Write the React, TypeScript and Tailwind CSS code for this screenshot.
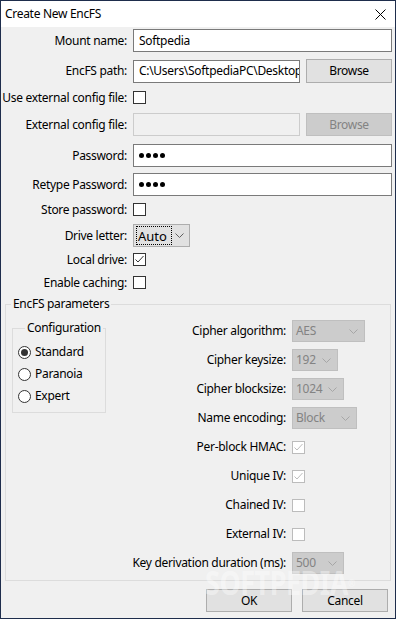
import React from "react"

const font = { fontFamily: '"Noto Sans", "Open Sans", Arial, sans-serif' }

const Chevron = ({ disabled }: { disabled?: boolean }) => (
  <svg width="9" height="5" viewBox="0 0 9 5" className="shrink-0">
    <polyline points="0.5,0.5 4.5,4.5 8.5,0.5" fill="none" stroke={disabled ? "#a6a6a6" : "#606060"} strokeWidth="1" />
  </svg>
)

const Check = ({ checked, disabled }: { checked?: boolean; disabled?: boolean }) => (
  <div className={`w-[13px] h-[13px] border bg-white flex items-center justify-center ${disabled ? "border-[#bcbcbc]" : "border-[#333333]"}`}>
    {checked && (
      <svg width="11" height="11" viewBox="0 0 11 11">
        <polyline points="1.5,5.5 4,8 9.5,2" fill="none" stroke={disabled ? "#bcbcbc" : "#333333"} strokeWidth="1" />
      </svg>
    )}
  </div>
)

const Radio = ({ checked, label }: { checked?: boolean; label: string }) => (
  <div className="flex items-center h-[22px] gap-[4px]">
    <div className="w-[13px] h-[13px] rounded-full border border-[#333333] bg-white flex items-center justify-center">
      {checked && <div className="w-[7px] h-[7px] rounded-full bg-[#333333]" />}
    </div>
    <span>{label}</span>
  </div>
)

const Combo = ({ value, width, disabled }: { value: string; width: string; disabled?: boolean }) => (
  <div className={`${width} h-[22px] border flex items-center justify-between pl-[3px] pr-[6px] ${disabled ? "bg-[#cccccc] border-[#bfbfbf] text-[#838383]" : "bg-[#e1e1e1] border-[#adadad]"}`}>
    <span>{value}</span>
    <Chevron disabled={disabled} />
  </div>
)

const Label = ({ children }: { children: React.ReactNode }) => (
  <div className="flex justify-end items-center whitespace-nowrap">{children}</div>
)

const TextBox = ({ children, disabled }: { children?: React.ReactNode; disabled?: boolean }) => (
  <div className={`h-[23px] border flex items-center px-[5px] overflow-hidden whitespace-nowrap ${disabled ? "bg-[#f0f0f0] border-[#cccccc]" : "bg-white border-[#7a7a7a]"}`}>
    {children}
  </div>
)

const Button = ({ children, disabled, width }: { children: React.ReactNode; disabled?: boolean; width: string }) => (
  <div className={`${width} h-[23px] border flex items-center justify-center shrink-0 ${disabled ? "bg-[#cccccc] border-[#bfbfbf] text-[#838383]" : "bg-[#e1e1e1] border-[#adadad]"}`}>
    {children}
  </div>
)

const Dots = () => (
  <div className="flex gap-[2px]">
    {[0, 1, 2, 3].map((i) => (
      <div key={i} className="w-[5px] h-[5px] rounded-full bg-black" />
    ))}
  </div>
)

export default function App() {
  return (
    <div style={font} className="relative w-[396px] h-[619px] border border-[#1e2d4c] flex flex-col text-[12px] leading-[16px] tracking-[-0.3px] text-black overflow-hidden">
      <div className="h-[26px] bg-white flex items-center justify-between pl-[4px] pr-[9px] shrink-0">
        <span>Create New EncFS</span>
        <svg width="11" height="11" viewBox="0 0 11 11">
          <path d="M0.5 0.5 L10.5 10.5 M10.5 0.5 L0.5 10.5" stroke="#000" strokeWidth="1" />
        </svg>
      </div>

      <div className="flex-1 bg-[#f0f0f0] flex flex-col">
        <div className="grid grid-cols-[126px_minmax(0,1fr)] gap-x-[6px] pr-[3px] pt-[2px]">
          <Label>Mount name:</Label>
          <TextBox>Softpedia</TextBox>

          <Label>
            <span className="mt-[7px]">EncFS path:</span>
          </Label>
          <div className="flex gap-[6px] mt-[7px] h-[24px] items-center min-w-0">
            <div className="flex-1 min-w-0">
              <TextBox>C:\Users\SoftpediaPC\Desktop\Encrypted</TextBox>
            </div>
            <div className="w-[86px] h-[24px] shrink-0 border bg-[#e1e1e1] border-[#adadad] flex items-center justify-center">Browse</div>
          </div>

          <Label>
            <span className="mt-[3px]">Use external config file:</span>
          </Label>
          <div className="h-[23px] mt-[3px] flex items-center">
            <Check />
          </div>

          <Label>
            <span className="mt-[4px]">External config file:</span>
          </Label>
          <div className="flex gap-[6px] mt-[4px] min-w-0">
            <div className="flex-1 min-w-0">
              <TextBox disabled />
            </div>
            <Button width="w-[86px]" disabled>
              Browse
            </Button>
          </div>

          <Label>
            <span className="mt-[8px]">Password:</span>
          </Label>
          <div className="mt-[8px]">
            <TextBox>
              <Dots />
            </TextBox>
          </div>

          <Label>
            <span className="mt-[6px]">Retype Password:</span>
          </Label>
          <div className="mt-[6px]">
            <TextBox>
              <Dots />
            </TextBox>
          </div>

          <Label>
            <span className="mt-[2px]">Store password:</span>
          </Label>
          <div className="h-[23px] mt-[2px] flex items-center">
            <Check />
          </div>

          <Label>
            <span className="mt-[3px]">Drive letter:</span>
          </Label>
          <div className="mt-[3px]">
            <div className="w-[57px] h-[23px] border bg-[#e1e1e1] border-[#adadad] flex items-center justify-between pl-[2px] pr-[5px]">
              <span className="border border-dotted border-black px-[1px] h-[19px] w-[36px] flex items-center text-[13px] tracking-normal">Auto</span>
              <Chevron />
            </div>
          </div>

          <Label>
            <span className="mt-[1px]">Local drive:</span>
          </Label>
          <div className="h-[23px] mt-[1px] flex items-center">
            <Check checked />
          </div>

          <Label>Enable caching:</Label>
          <div className="h-[23px] flex items-center">
            <Check />
          </div>
        </div>

        <fieldset className="mx-[4px] mt-[2px] border border-[#dcdcdc] pb-[6px]">
          <legend className="ml-[5px] px-[2px] leading-[16px]">EncFS parameters</legend>
          <div className="flex pt-[8px]">
            <fieldset className="ml-[6px] w-[94px] h-[93px] border border-[#dcdcdc] pl-[5px] pt-[5px] shrink-0">
              <legend className="ml-[7px] px-[2px] leading-[16px]">Configuration</legend>
              <Radio checked label="Standard" />
              <Radio label="Paranoia" />
              <Radio label="Expert" />
            </fieldset>

            <div className="flex-1 grid grid-cols-[1fr_98px] gap-x-[6px] gap-y-[7px] auto-rows-[22px]">
              <Label>Cipher algorithm:</Label>
              <Combo value="AES" width="w-[73px]" disabled />
              <Label>Cipher keysize:</Label>
              <Combo value="192" width="w-[46px]" disabled />
              <Label>Cipher blocksize:</Label>
              <Combo value="1024" width="w-[52px]" disabled />
              <Label>Name encoding:</Label>
              <Combo value="Block" width="w-[65px]" disabled />
              <Label>Per-block HMAC:</Label>
              <div className="flex items-center">
                <Check checked disabled />
              </div>
              <Label>Unique IV:</Label>
              <div className="flex items-center">
                <Check checked disabled />
              </div>
              <Label>Chained IV:</Label>
              <div className="flex items-center">
                <Check disabled />
              </div>
              <Label>External IV:</Label>
              <div className="flex items-center">
                <Check disabled />
              </div>
              <Label>Key derivation duration (ms):</Label>
              <Combo value="500" width="w-[52px]" disabled />
            </div>
          </div>
        </fieldset>

        <div className="flex justify-end gap-[10px] mt-[8px] pr-[7px]">
          <Button width="w-[86px]">OK</Button>
          <Button width="w-[86px]">Cancel</Button>
        </div>
      </div>

      <div className="absolute left-[204px] top-[563px] origin-top-left scale-y-125 text-[27px] leading-[30px] font-bold tracking-[-0.5px] text-white/40 whitespace-nowrap pointer-events-none select-none">
        SOFTPEDIA<span className="text-[9px] align-top">®</span>
      </div>
    </div>
  )
}
